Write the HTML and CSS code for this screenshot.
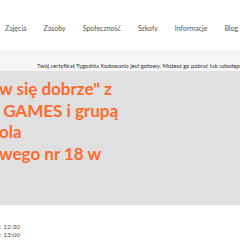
FILE: index.html
```html
<!DOCTYPE html>
<html lang="pl">
<head>
    <meta charset="UTF-8">
    <meta name="viewport" content="width=device-width, initial-scale=1.0">
    <title>Tydzień Kodowania</title>
    <link rel="stylesheet" href="styles.css">
</head>
<body>
    <header class="site-header">
        <nav class="main-nav">
            <a href="#">Zajęcia</a>
            <a href="#">Zasoby</a>
            <a href="#">Społeczność</a>
            <a href="#">Szkoły</a>
            <a href="#">Informacje</a>
            <a href="#">Blog</a>
        </nav>
    </header>

    <div class="cert-bar">
        <p>Twój certyfikat Tygodnia Kodowania jest gotowy. Możesz go pobrać lub udostępnić</p>
    </div>

    <section class="hero">
        <h1 class="hero-title">w się dobrze" z<br>&nbsp;GAMES i grupą<br>ola<br>wego nr 18 w</h1>
    </section>

    <section class="details">
        <p class="time"><span class="label">:</span> 12:30</p>
        <p class="time"><span class="label">:</span> 13:00</p>
    </section>
</body>
</html>
```

FILE: styles.css
```css
/* Global */
* {
    box-sizing: border-box;
}
body {
    margin: 0;
    padding: 0;
    font-family: Lato, "Noto Sans", sans-serif;
    background-color: #fff;
    color: #333;
    overflow: hidden;
}

/* Header */
.site-header {
    height: 50px;
    background-color: #fff;
    display: flex;
    align-items: center;
}
.main-nav {
    display: flex;
    gap: 17px;
    padding-left: 5px;
    padding-top: 5px;
    white-space: nowrap;
}
.main-nav a {
    text-decoration: none;
    color: #555;
    font-size: 7px;
}

/* Certificate notice */
.cert-bar {
    height: 21px;
    background-color: #f6f6f6;
    display: flex;
    align-items: center;
    padding-left: 37px;
    padding-top: 9px;
    white-space: nowrap;
}
.cert-bar p {
    margin: 0;
    font-size: 5.8px;
    color: #333;
}

/* Hero */
.hero {
    height: 134px;
    background-color: #e0e0e0;
    padding-top: 7px;
}
.hero-title {
    margin: 0 0 0 -1px;
    font-family: Lato, "Noto Sans", sans-serif;
    font-size: 17px;
    line-height: 21.6px;
    font-weight: 700;
    color: #ff6b2c;
    white-space: nowrap;
}

/* Details */
.details {
    padding-top: 18px;
}
.time {
    margin: 0;
    font-size: 6.5px;
    line-height: 8px;
    color: #555;
}
.label {
    color: #2a7ab8;
}
```
